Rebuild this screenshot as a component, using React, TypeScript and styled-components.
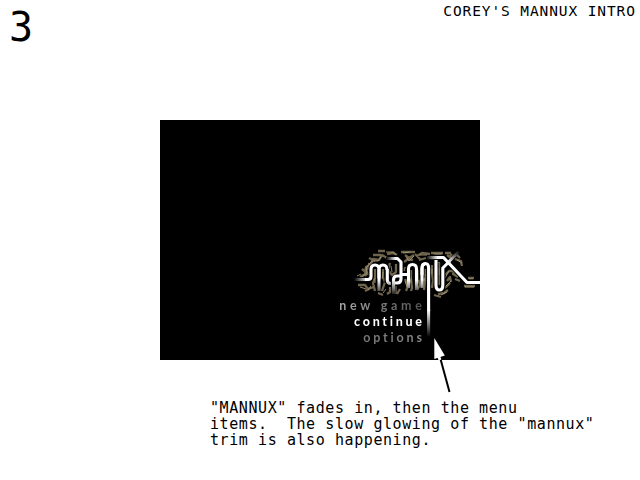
import React from 'react';
import styled, { createGlobalStyle } from 'styled-components';

const GlobalStyle = createGlobalStyle`
  body { margin: 0; background: #fff; overflow: hidden; }
  * { box-sizing: border-box; }
`;

const Page = styled.main`
  width: 640px;
  height: 480px;
  display: grid;
  grid-template-rows: 120px 240px 120px;
  background: #fff;
  color: #000;
  font-family: "DejaVu Sans Mono", monospace;
  position: relative;
`;

const Header = styled.header`
  display: flex;
  justify-content: space-between;
  align-items: flex-start;
`;

const FrameNumber = styled.div`
  font-size: 40px;
  line-height: 48px;
  padding: 3px 0 0 9px;
`;

const Title = styled.h1`
  margin: 0 -0.87px 0 0;
  padding: 3px 5px 0 0;
  font-size: 14.5px;
  font-weight: 400;
  line-height: 16px;
  letter-spacing: 0.9px;
`;

const Screen = styled.section`
  width: 320px;
  height: 240px;
  margin: 0 auto;
  background: #000;
  display: flex;
  flex-direction: column;
  align-items: flex-end;
`;

const Logo = styled.svg`
  display: block;
  flex: none;
  margin-top: 125px;
  margin-bottom: -42px;
`;

const Menu = styled.nav`
  display: flex;
  flex-direction: column;
  align-items: flex-end;
  padding-right: 57px;
`;

const MenuItem = styled.div<{ $from: string; $to: string; $spacing: number; $bold?: boolean }>`
  height: 16px;
  line-height: 16px;
  font-family: Lato, sans-serif;
  font-size: 12.5px;
  font-weight: ${(p) => (p.$bold ? 900 : 700)};
  letter-spacing: ${(p) => p.$spacing}px;
  margin-right: ${(p) => 1 - p.$spacing}px;
  white-space: pre;
  color: transparent;
  background: linear-gradient(90deg, ${(p) => p.$from}, ${(p) => p.$to});
  background-clip: text;
`;

const Caption = styled.p`
  margin: 0;
  padding: 40px 0 0 210px;
  font-size: 15px;
  line-height: 16px;
  letter-spacing: 0.58px;
  white-space: pre;
`;

const Pointer = styled.svg`
  position: absolute;
  left: 428px;
  top: 330px;
`;

const MannuxLogo = () => (
  <Logo width="130" height="95" viewBox="350 245 130 95" fill="none">
    <defs>
      <linearGradient id="stem" gradientUnits="userSpaceOnUse" x1="0" y1="310" x2="0" y2="337">
        <stop stopColor="#fff" />
        <stop offset="1" stopColor="#000" />
      </linearGradient>
      <linearGradient id="legs" gradientUnits="userSpaceOnUse" x1="0" y1="270" x2="0" y2="294">
        <stop stopColor="#fff" />
        <stop offset=".4" stopColor="#fff" />
        <stop offset="1" stopColor="#222" />
      </linearGradient>
      <linearGradient id="tail" gradientUnits="userSpaceOnUse" x1="354" y1="0" x2="368" y2="0">
        <stop stopColor="#000" />
        <stop offset="1" stopColor="#fff" />
      </linearGradient>
      <linearGradient id="hook" gradientUnits="userSpaceOnUse" x1="386" y1="0" x2="396" y2="0">
        <stop stopColor="#000" />
        <stop offset="1" stopColor="#fff" />
      </linearGradient>
      <linearGradient id="bar" gradientUnits="userSpaceOnUse" x1="426" y1="0" x2="438" y2="0">
        <stop stopColor="#000" />
        <stop offset="1" stopColor="#fff" />
      </linearGradient>
      <linearGradient id="slash" gradientUnits="userSpaceOnUse" x1="459" y1="251" x2="448" y2="262">
        <stop stopColor="#000" />
        <stop offset="1" stopColor="#fff" />
      </linearGradient>
    </defs>
    <g stroke="#6e634b" strokeWidth="2.3" strokeLinejoin="round">
      <path d="M360 277l5-3 1-7 5-3 2-5 6 1 3-5 5 3M362 269l5 4-2 3M369 258l6 3M373 255l8 0M371 266l-5 4 2 5M358 285l7 0 3 4 6-2M365 291l4-2M375 269v8l-2 6 2 8M383 269v8l2 5-3 9M378 293l5 2M390 287v5l-3 2" />
      <path d="M378 251h7M387 254l6-1 4 2M390 263l-2 7 4 5 4-3v-8M405 255l4 3 5-3M404 262l4-3 5 1M405 267l-1 4M400 289l-3 5M405 279l3 7-2 5M411 270v9l1 9-1 3M401 252h14M417 256l5-3 8 1M419 260l7-2M418 270v9l2 6-3 5M425 269v12l-1 9M415 254l5 5" />
      <path d="M431 253h12M432 265v8l1 8-1 7M439 262v23M445 253h6M447 255l4 3M445 275l4-4 5 0M447 281l3-4 1 5M445 288l5-5M438 294l6-1 4-3M434 295l7 2M451 265l4 5-2 4 5 3M455 259l6 2 1 5M452 254l-2 2M457 255l3 3M460 281l-5-2M464 286h11M468 278h6" />
    </g>
    <g stroke="#a69a7b" strokeWidth="1" opacity=".85">
      <path d="M361 278l6-5-1-5 6-7 6 0 3-4M368 263l5 3M357 276l4-2M360 287l6 2M371 286l-3 4M375 278v5M383 272l-1 7M386 289l-3 4M386 252l8 0 2 3M391 266l1 6M406 257l3 4 5-5M405 281l2 6M411 277v6M403 253l7-1M418 273v8M425 274l-1 7M420 255h7M434 254h8M432 269v5M439 268v7M449 271l-4 7M446 286l5-5M441 295l6-3M454 267l3 3-1 4M457 260l5 3M465 287h9M469 279h4M396 286v8" />
    </g>
    <g strokeWidth="5" stroke="#000">
      <path d="M357 279.500h12q2 0 2-3v-7q0-4 4-4t4 4v10M379 269q0-4 4-4t4 4v14M390 258h8l3 3v20M408 279v-11M416 268v12M422 278v-12M436 263v22q0 5 3.500 5t3.500-5v-17l8-8M431 258h13l23 24h14" />
    </g>
    <g strokeWidth="3.100" strokeLinejoin="round">
      <path stroke="url(#tail)" d="M354 279.500h12" />
      <path stroke="#fff" d="M365 279.500h3q3 0 3-3v-7q0-4.500 4-4.500t4 4.500v9M379 270q0-5 4-5t4 5" />
      <path stroke="url(#legs)" d="M379 269v22M387.300 269v11q0 3.500 3.500 3.500M393.500 294v-14q0-4 3.500-4h3M408.500 288v-19q0-4.500 4-4.500t4 4.500v21M401 274.500h7M422 288v-19q0-5 3.500-5" />
      <path stroke="url(#hook)" d="M386 258.500h11.500l3.500 3.500v17q0 4-4 4h-3" />
      <path stroke="#fff" d="M422 275v-7q0-4.500 3.300-4.500t3.300 4.500v43M436 260v25q0 5 3.400 5t3.400-5v-17l7-7" />
      <path stroke="url(#stem)" d="M428.600 310v27" />
      <path stroke="url(#bar)" d="M427 257.600L443 257.500" />
      <path stroke="#fff" d="M440 257.500h3.500l23.500 25h14" />
      <path stroke="url(#slash)" d="M447 263.500l12-12" />
    </g>
  </Logo>
);

export default function App() {
  return (
    <>
      <GlobalStyle />
      <Page>
        <Header>
          <FrameNumber>3</FrameNumber>
          <Title>COREY'S MANNUX INTRO</Title>
        </Header>
        <Screen>
          <MannuxLogo />
          <Menu>
            <MenuItem $from="#aaa" $to="#4c4c4c" $spacing={3.75}>new game</MenuItem>
            <MenuItem $from="#fff" $to="#fff" $spacing={2.7} $bold>continue</MenuItem>
            <MenuItem $from="#777" $to="#8a8a8a" $spacing={2.85}>options</MenuItem>
          </Menu>
        </Screen>
        <Caption>{`"MANNUX" fades in, then the menu
items.  The slow glowing of the "mannux"
trim is also happening.`}</Caption>
        <Pointer width="30" height="66" viewBox="428 330 30 66">
          <path d="M440.500 359l9 33" stroke="#000" strokeWidth="2" />
          <path d="M434.300 338v21l10.500-3.500z" fill="#fff" />
          <path d="M438.500 356l1.500 4" stroke="#fff" strokeWidth="3" />
        </Pointer>
      </Page>
    </>
  );
}
